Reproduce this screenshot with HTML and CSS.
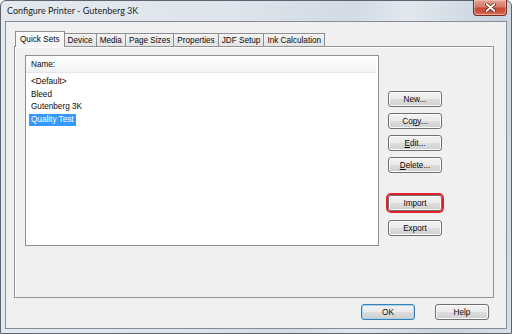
FILE: index.html
```html
<!DOCTYPE html>
<html>
<head>
<meta charset="utf-8">
<link rel="stylesheet" href="styles.css">
</head>
<body>
<div class="window">
  <div class="titlebar">
    <span class="title">Configure Printer - Gutenberg 3K</span>
    <button class="close" aria-label="Close">
      <svg width="11" height="9" viewBox="0 0 11 9"><path d="M1.5 1 L9.5 8 M9.5 1 L1.5 8" stroke="#5a1a12" stroke-width="3.2" stroke-linecap="round"/><path d="M1.5 1 L9.5 8 M9.5 1 L1.5 8" stroke="#ffffff" stroke-width="1.8" stroke-linecap="round"/></svg>
    </button>
  </div>
  <div class="client">
    <div class="tabs">
      <div class="tab active">Quick Sets</div>
      <div class="tab">Device</div>
      <div class="tab">Media</div>
      <div class="tab">Page Sizes</div>
      <div class="tab">Properties</div>
      <div class="tab">JDF Setup</div>
      <div class="tab">Ink Calculation</div>
    </div>
    <div class="panel">
      <div class="list">
        <div class="list-header">Name:</div>
        <ul class="items">
          <li><span class="item">&lt;Default&gt;</span></li>
          <li><span class="item">Bleed</span></li>
          <li><span class="item">Gutenberg 3K</span></li>
          <li><span class="item selected">Quality Test</span></li>
        </ul>
      </div>
      <div class="side">
        <button class="btn">New...</button>
        <button class="btn">Co<u>p</u>y...</button>
        <button class="btn"><u>E</u>dit...</button>
        <button class="btn"><u>D</u>elete...</button>
        <button class="btn import">Import</button>
        <button class="btn export">Export</button>
      </div>
    </div>
    <div class="footer">
      <button class="btn default">OK</button>
      <button class="btn">Help</button>
    </div>
  </div>
</div>
</body>
</html>
```
FILE: styles.css
```css
* { box-sizing: border-box; }
html, body { margin: 0; padding: 0; background: #ffffff; }
body { font-family: "Liberation Sans", Arial, sans-serif; font-size: 8.2px; color: #0a0a0a; }

.window {
  width: 512px;
  height: 334px;
  border: 1px solid #5b6470;
  border-radius: 6px 6px 0 0;
  background: linear-gradient(100deg, #e4e9ef 0%, #dfe5ec 40%, #d2dae4 62%, #e2e8ee 72%, #c9d3de 88%, #d7dee7 100%);
  padding: 0 4px 4px 4px;
  display: flex;
  flex-direction: column;
}

.titlebar {
  height: 20px;
  display: flex;
  align-items: flex-start;
}
.title {
  padding-left: 2px;
  padding-top: 4px;
  font-family: "Lato", "Liberation Sans", sans-serif;
  font-size: 9px;
  color: #1e1e1e;
}
.close {
  margin-left: auto;
  margin-top: -1px;
  width: 34px;
  height: 16px;
  border: 1px solid #7a2a20;
  border-top: none;
  border-radius: 0 0 4px 4px;
  background: linear-gradient(#e3a293 0%, #d77a69 45%, #c74a36 55%, #cc5a45 85%, #dc8a76 100%);
  box-shadow: inset 0 0 0 1px rgba(255,210,200,0.5);
  padding: 0;
  display: flex;
  align-items: center;
  justify-content: center;
}

.client {
  flex: 1;
  background: #f0f0f0;
  border: 1px solid #838c97;
  padding: 9px 12px 0 8px;
  display: flex;
  flex-direction: column;
}

.tabs {
  display: flex;
  align-items: flex-end;
  height: 15px;
  padding-left: 1px;
  position: relative;
  z-index: 1;
}
.tab {
  height: 13px;
  padding: 0 3px;
  border: 1px solid #8c8e94;
  border-bottom: none;
  margin-right: -1px;
  background: linear-gradient(#f3f3f3, #e4e4e4);
  line-height: 13px;
  white-space: nowrap;
}
.tab.active {
  height: 16px;
  margin-bottom: -1px;
  padding: 0 4px;
  line-height: 15px;
  background: linear-gradient(#fdfdfd, #f3f3f3);
  position: relative;
  z-index: 2;
}

.panel {
  height: 252px;
  border: 1px solid #929498;
  background: #f0f0f0;
  box-shadow: inset 1px 1px 0 #ffffff;
  padding: 8px 0 0 10px;
  display: flex;
  align-items: flex-start;
}

.list {
  width: 354px;
  height: 191px;
  border: 1px solid #8b8f96;
  background: #ffffff;
}
.list-header {
  height: 17px;
  margin-right: 2px;
  padding-left: 5px;
  padding-top: 1px;
  line-height: 16px;
  background: linear-gradient(#ffffff, #f1f2f4);
  border-bottom: 1px solid #e4e6ea;
}
.items {
  list-style: none;
  margin: 0;
  padding: 3px 0 0 3px;
}
.items li {
  height: 12.5px;
  line-height: 12.5px;
}
.item {
  display: inline-block;
  padding: 0 2px;
}
.item.selected {
  background: #3399ff;
  color: #ffffff;
  height: 12px;
  line-height: 12px;
}

.side {
  margin-left: 9px;
  padding-top: 36px;
  display: flex;
  flex-direction: column;
  gap: 6px;
}

.btn {
  width: 54px;
  height: 16px;
  padding: 0;
  border: 1px solid #707070;
  border-radius: 3px;
  background: linear-gradient(#f2f2f2 0%, #ebebeb 48%, #dddddd 52%, #cfcfcf 100%);
  box-shadow: inset 0 0 0 1px #fbfbfb;
  font-family: "Liberation Sans", Arial, sans-serif;
  font-size: 8.2px;
  line-height: 13px;
  color: #0a0a0a;
}
.btn u { text-decoration-thickness: 1px; text-underline-offset: 1px; }
.btn.import {
  margin-top: 16px;
  outline: 2px solid #e3202c;
  outline-offset: 0px;
}
.btn.export { margin-top: 3px; }

.footer {
  margin-top: 6px;
  padding-right: 5px;
  display: flex;
  justify-content: flex-end;
  gap: 20px;
}
.btn.default {
  border-color: #3c7fb1;
  box-shadow: inset 0 0 0 1px #9fd4f3;
}
```
